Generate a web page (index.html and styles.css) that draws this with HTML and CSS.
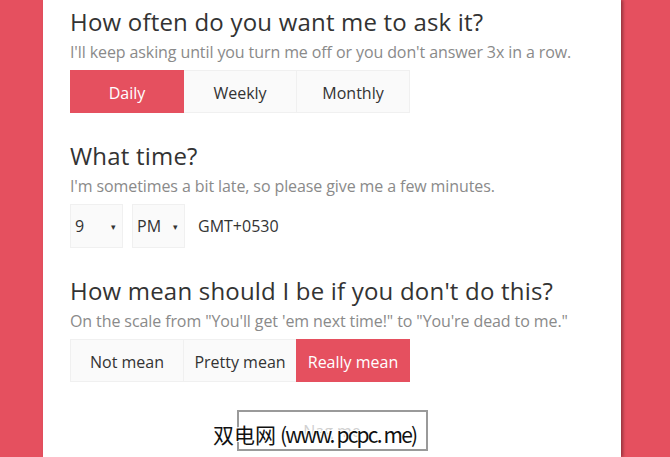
FILE: index.html
```html
<!DOCTYPE html>
<html lang="en">
<head>
  <meta charset="UTF-8">
  <meta name="viewport" content="width=device-width, initial-scale=1.0">
  <title>Nag me</title>
  <link rel="stylesheet" href="styles.css">
</head>
<body>
  <div class="panel">
    <section class="question">
      <h2>How often do you want me to ask it?</h2>
      <p class="hint">I'll keep asking until you turn me off or you don't answer 3x in a row.</p>
      <div class="choices">
        <button class="choice active">Daily</button>
        <button class="choice">Weekly</button>
        <button class="choice">Monthly</button>
      </div>
    </section>

    <section class="question">
      <h2>What time?</h2>
      <p class="hint">I'm sometimes a bit late, so please give me a few minutes.</p>
      <div class="time-row">
        <div class="fake-select"><span>9</span><span class="arrow">&#9662;</span></div>
        <div class="fake-select"><span>PM</span><span class="arrow">&#9662;</span></div>
        <span class="zone">GMT+0530</span>
      </div>
    </section>

    <section class="question">
      <h2>How mean should I be if you don't do this?</h2>
      <p class="hint">On the scale from "You'll get 'em next time!" to "You're dead to me."</p>
      <div class="choices">
        <button class="choice">Not mean</button>
        <button class="choice">Pretty mean</button>
        <button class="choice active">Really mean</button>
      </div>
    </section>

    <div class="submit-row">
      <button class="nag-button">Nag me</button>
      <!-- site watermark sitting over the button -->
      <div class="watermark">双电网<span class="site">(www. pcpc. me)</span></div>
    </div>
  </div>
</body>
</html>
```

FILE: styles.css
```css
body {
  margin: 0;
  padding: 0;
  background-color: #e5505f;
  font-family: "Open Sans", "Noto Sans", sans-serif;
  color: #333;
}
.panel {
  margin-left: 43px;
  width: 578px;
  min-height: 100vh;
  box-sizing: border-box;
  padding: 7px 27px 0 27px;
  background-color: white;
  box-shadow: 2px 0 3px rgba(0, 0, 0, 0.35);
}
.question {
  margin-bottom: 28px;
}
.question h2 {
  margin: 0;
  font-size: 24px;
  line-height: 30px;
  letter-spacing: 0.2px;
  font-weight: normal;
  color: #333;
}
.hint {
  margin: 4px 0 7px 0;
  font-size: 16px;
  line-height: 22px;
  letter-spacing: -0.1px;
  color: #8a8a8a;
}
.choices {
  display: flex;
}
.choice {
  width: 114px;
  height: 43px;
  padding: 3px 0 0 0;
  border: 1px solid #f0f0f0;
  margin-right: -1px;
  background-color: #fafafa;
  font-family: inherit;
  font-size: 16px;
  color: #333;
  cursor: pointer;
}
.choice.active {
  background-color: #e5505f;
  border-color: #e5505f;
  color: white;
  position: relative;
}
/* time picker */
.time-row {
  display: flex;
  align-items: center;
  gap: 9px;
}
.fake-select {
  width: 53px;
  height: 44px;
  box-sizing: border-box;
  padding: 0 6px 0 4px;
  border: 1px solid #f0f0f0;
  background-color: #fafafa;
  display: flex;
  align-items: center;
  justify-content: space-between;
  font-size: 16px;
}
.fake-select .arrow {
  font-size: 9px;
  color: #333;
}
.zone {
  margin-left: 4px;
  font-size: 16px;
}
.submit-row {
  display: flex;
  justify-content: center;
  position: relative;
}
.nag-button {
  width: 191px;
  height: 41px;
  border: 2px solid #9a9a9a;
  background-color: white;
  font-family: inherit;
  font-size: 16px;
  color: #d0d0d0;
}
.watermark {
  position: absolute;
  left: 143px;
  top: 11px;
  font-family: "Noto Sans CJK SC", sans-serif;
  font-size: 21px;
  line-height: 26px;
  color: #111;
  white-space: nowrap;
  text-shadow: 1px 1px 0 white, -1px -1px 0 white, 1px -1px 0 white, -1px 1px 0 white;
}
.watermark .site {
  margin-left: 4px;
  letter-spacing: -1.8px;
}
```
